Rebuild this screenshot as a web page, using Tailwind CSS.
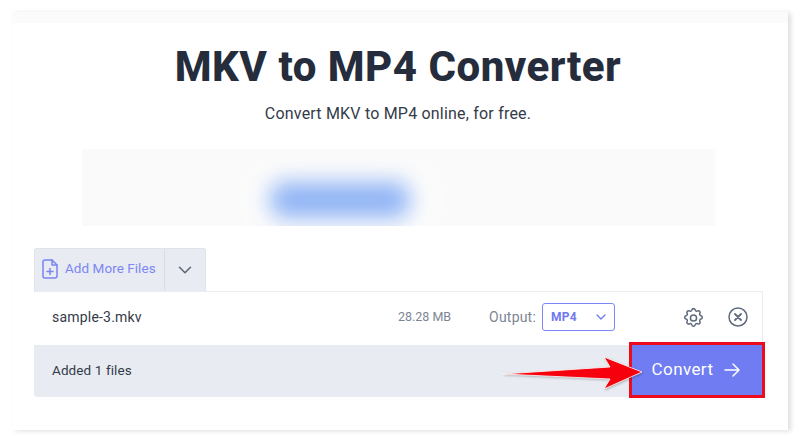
<!DOCTYPE html>
<html lang="en">
<head>
    <meta charset="UTF-8">
    <meta name="viewport" content="width=device-width, initial-scale=1.0">
    <script src="https://cdn.jsdelivr.net/npm/@tailwindcss/browser@4"></script>
</head>
<body class="bg-white h-[442px] w-[800px] overflow-hidden font-['Roboto',sans-serif]">
    <div class="relative mx-[12px] mt-[12px] w-[776px] h-[418px] bg-white shadow-[inset_0_11px_0_#fbfbfb,3px_1px_5px_rgba(0,0,0,0.13)] pt-[29px]">
        <h1 class="text-center pr-[4px] text-[42px] leading-[52px] font-extrabold tracking-[0.5px] text-[#252d3c]">MKV to MP4 Converter</h1>
        <p class="text-center pr-[4px] text-[16px] leading-[24px] mt-[9px] tracking-[0.2px] text-[#333b49]">Convert MKV to MP4 online, for free.</p>

        <!-- Blurred ad -->
        <div class="relative overflow-hidden ml-[70px] mt-[23px] w-[633px] h-[77px] bg-[#fafafa]">
            <div class="absolute left-[170px] top-[22px] w-[180px] h-[60px] bg-white/70 blur-[16px]"></div>
            <div class="absolute left-[188px] top-[33px] w-[140px] h-[36px] rounded-[14px] bg-[#8fb3f5] blur-[11px]"></div>
        </div>

        <!-- Tabs -->
        <div class="ml-[22px] mt-[22px] flex w-[172px] h-[43px] bg-[#e8ebf2] rounded-t-[3px] border border-b-0 border-[#dfe3ea]">
            <div class="flex items-center gap-[7px] pl-[7px] pb-[3px] w-[130px] border-r border-[#d9dde5]">
                <svg class="w-[16px] h-[20px] shrink-0" viewBox="0 0 16 20" fill="none" stroke="#7a84f2" stroke-width="1.500" stroke-linejoin="round" stroke-linecap="round">
                    <path d="M3 1h7l5 5v11a2 2 0 0 1-2 2H3a2 2 0 0 1-2-2V3a2 2 0 0 1 2-2z"/>
                    <path d="M10 1v5h5M8 9.500v6M5 12.500h6"/>
                </svg>
                <span class="text-[13.500px] tracking-[0.05px] text-[#7d86f2] whitespace-nowrap">Add More Files</span>
            </div>
            <div class="flex-1 flex items-center justify-center pb-[1px]">
                <svg class="w-[14px] h-[8px]" viewBox="0 0 14 8" fill="none" stroke="#5d6675" stroke-width="1.500" stroke-linecap="round" stroke-linejoin="round"><path d="M1.500 1.200 7 6.800l5.500-5.600"/></svg>
            </div>
        </div>

        <!-- File row -->
        <div class="ml-[22px] w-[729px] h-[54px] flex items-center border-t border-r border-[#e9ecf1] pl-[18px] pb-[3px]">
            <span class="text-[14px] tracking-[0.2px] text-[#333b49]">sample-3.mkv</span>
            <span class="ml-auto text-[12.500px] text-[#7d8593]">28.28 MB</span>
            <span class="ml-[38px] text-[14px] tracking-[0.2px] text-[#7d8593]">Output:</span>
            <div class="ml-[6px] w-[73px] h-[28px] flex items-center justify-between px-[8px] border border-[#7d86f2] rounded-[3px]">
                <span class="text-[12px] font-bold tracking-[0.3px] text-[#6f79ef]">MP4</span>
                <svg class="w-[10px] h-[6px]" viewBox="0 0 10 6" fill="none" stroke="#6f79ef" stroke-width="1.300" stroke-linecap="round" stroke-linejoin="round"><path d="M1 1l4 4 4-4"/></svg>
            </div>
            <svg class="ml-[67px] w-[23px] h-[23px]" viewBox="0 0 24 24" fill="none" stroke="#5f6b7d" stroke-width="1.600" stroke-linecap="round" stroke-linejoin="round">
                <path d="M10.300 2.600c.4-1.800 3-1.800 3.400 0a1.700 1.700 0 0 0 2.600 1.100c1.500-.9 3.300.8 2.400 2.400a1.700 1.700 0 0 0 1.100 2.600c1.800.4 1.800 3 0 3.400a1.700 1.700 0 0 0-1.100 2.600c.9 1.500-.8 3.300-2.400 2.400a1.700 1.700 0 0 0-2.600 1.100c-.4 1.800-3 1.800-3.400 0a1.700 1.700 0 0 0-2.600-1.100c-1.500.9-3.300-.8-2.400-2.400a1.700 1.700 0 0 0-1.100-2.600c-1.800-.4-1.800-3 0-3.400a1.700 1.700 0 0 0 1.100-2.600c-.9-1.500.8-3.300 2.400-2.400a1.700 1.700 0 0 0 2.600-1.100z" transform="translate(0 1.500)"/>
                <circle cx="12" cy="12.500" r="3.200"/>
            </svg>
            <svg class="ml-[23px] mr-[14px] w-[20px] h-[20px]" viewBox="0 0 20 20" fill="none" stroke="#5f6b7d" stroke-width="1.500" stroke-linecap="round">
                <circle cx="10" cy="10" r="9"/>
                <path d="M7 7l6 6M13 7l-6 6" stroke-width="1.800"/>
            </svg>
        </div>

        <!-- Bottom bar -->
        <div class="ml-[22px] w-[729px] h-[52px] flex items-center bg-[#e8ebf2] rounded-b-[3px] pl-[18px] pb-[1px]">
            <span class="text-[13.500px] tracking-[0.1px] text-[#333b49]">Added 1 files</span>
        </div>

        <!-- Highlighted convert button -->
        <div class="absolute left-[617px] top-[330px] w-[136px] h-[56px] border-[3px] border-[#ee0b1e] bg-[#6f7cf2] flex items-center justify-center gap-[11px] pr-[2px] text-white">
            <span class="text-[17px] tracking-[0.4px]">Convert</span>
            <svg class="w-[16px] h-[14px]" viewBox="0 0 16 14" fill="none" stroke="#fff" stroke-width="1.500" stroke-linecap="round" stroke-linejoin="round"><path d="M1 7h14M9 1l6 6-6 6"/></svg>
        </div>

        <!-- Red annotation arrow -->
        <svg class="absolute left-[488px] top-[336px] w-[156px] h-[46px] drop-shadow-[1px_1px_1px_rgba(0,0,0,0.25)]" viewBox="0 0 156 46">
            <path d="M3 26 110 19 104 9 142 24 104 41 110 31Z" fill="#f5000c" stroke="#fff" stroke-width="0.800" stroke-linejoin="round"/>
        </svg>
    </div>
</body>
</html>
